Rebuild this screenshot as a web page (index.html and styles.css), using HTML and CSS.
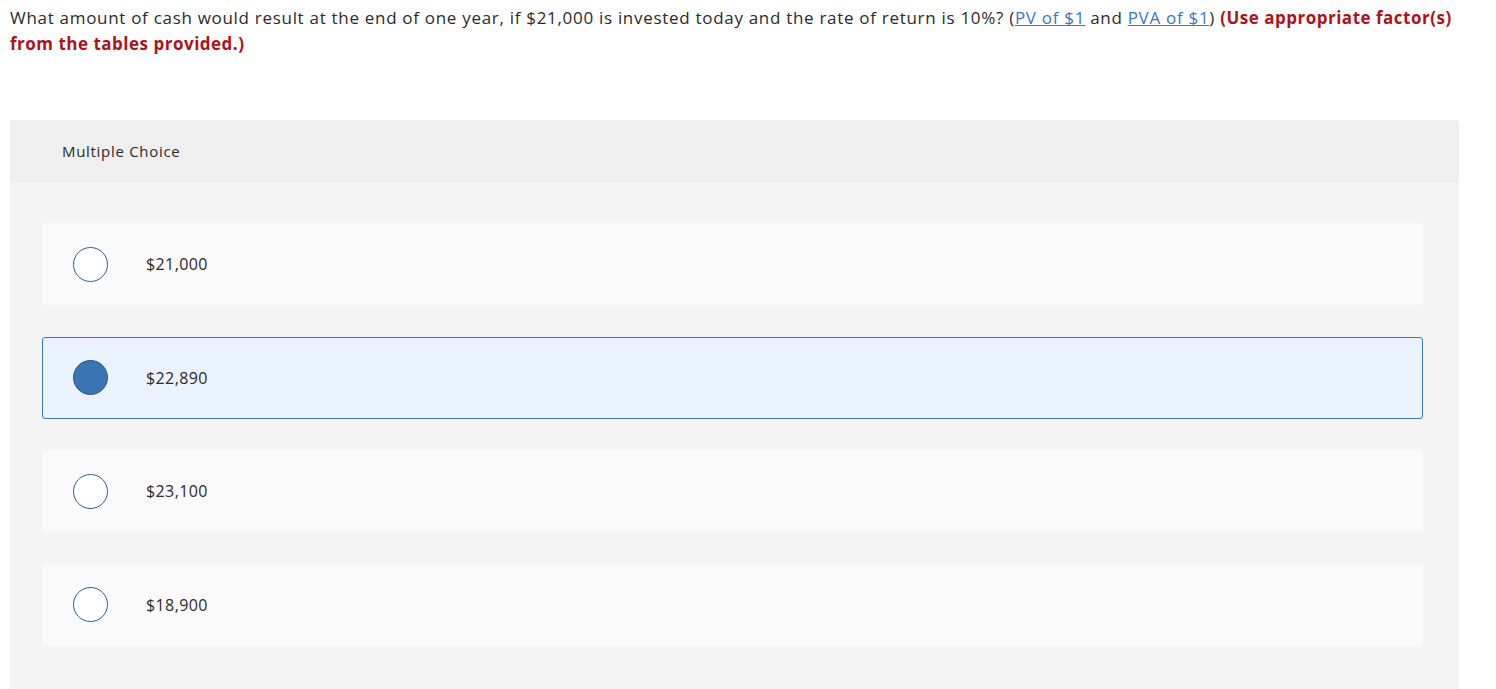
FILE: index.html
```html
<!DOCTYPE html>
<html>
<head>
<meta charset="utf-8">
<link rel="stylesheet" href="styles.css">
</head>
<body>
<div class="page">
  <p class="question">What amount of cash would result at the end of one year, if $21,000 is invested today and the rate of return is 10%? (<a href="#" class="link">PV of $1</a> and <a href="#" class="link">PVA of $1</a>) <strong class="note">(Use appropriate factor(s) from the tables provided.)</strong></p>
  <div class="mc">
    <div class="mc-header">Multiple Choice</div>
    <div class="mc-body">
      <div class="option"><span class="radio"></span><span class="label">$21,000</span></div>
      <div class="option selected"><span class="radio"></span><span class="label">$22,890</span></div>
      <div class="option"><span class="radio"></span><span class="label">$23,100</span></div>
      <div class="option"><span class="radio"></span><span class="label">$18,900</span></div>
    </div>
  </div>
</div>
</body>
</html>
```
FILE: styles.css
```css
html, body {
  margin: 0;
  padding: 0;
  background: #ffffff;
}
body {
  font-family: "Open Sans", Lato, sans-serif;
  color: #2b2b2b;
}
.page {
  padding: 5px 37px 0 10px;
}
.question {
  margin: 0;
  font-size: 17px;
  line-height: 26px;
  letter-spacing: 0.7px;
}
.link {
  color: #3b78c0;
  text-decoration: underline;
}
.note {
  color: #b0121b;
  font-weight: 700;
  letter-spacing: 0.5px;
}
.mc {
  margin-top: 63px;
  border-radius: 3px 3px 0 0;
  overflow: hidden;
}
.mc-header {
  background: #efefef;
  height: 62px;
  padding-left: 52px;
  display: flex;
  align-items: center;
  font-size: 15px;
  letter-spacing: 0.7px;
  color: #2b2b2b;
}
.mc-body {
  background: #f4f4f4;
  padding: 41px 36px 60px 32px;
  display: flex;
  flex-direction: column;
  gap: 31.5px;
}
.option {
  height: 82px;
  background: #fafafa;
  border-radius: 3px;
  display: flex;
  align-items: center;
  box-sizing: border-box;
  padding-left: 30px;
  border: 1px solid transparent;
}
.option.selected {
  background: #eaf2fb;
  border-color: #3a78c1;
}
.radio {
  width: 33px;
  height: 33px;
  border: 1.5px solid #2d5f8f;
  border-radius: 50%;
  background: #ffffff;
  flex: none;
}
.selected .radio {
  background: #3a74b5;
  border-color: #2b5a8a;
}
.label {
  margin-left: 38px;
  font-size: 16px;
  letter-spacing: 0.4px;
  color: #2b2b2b;
}
```
